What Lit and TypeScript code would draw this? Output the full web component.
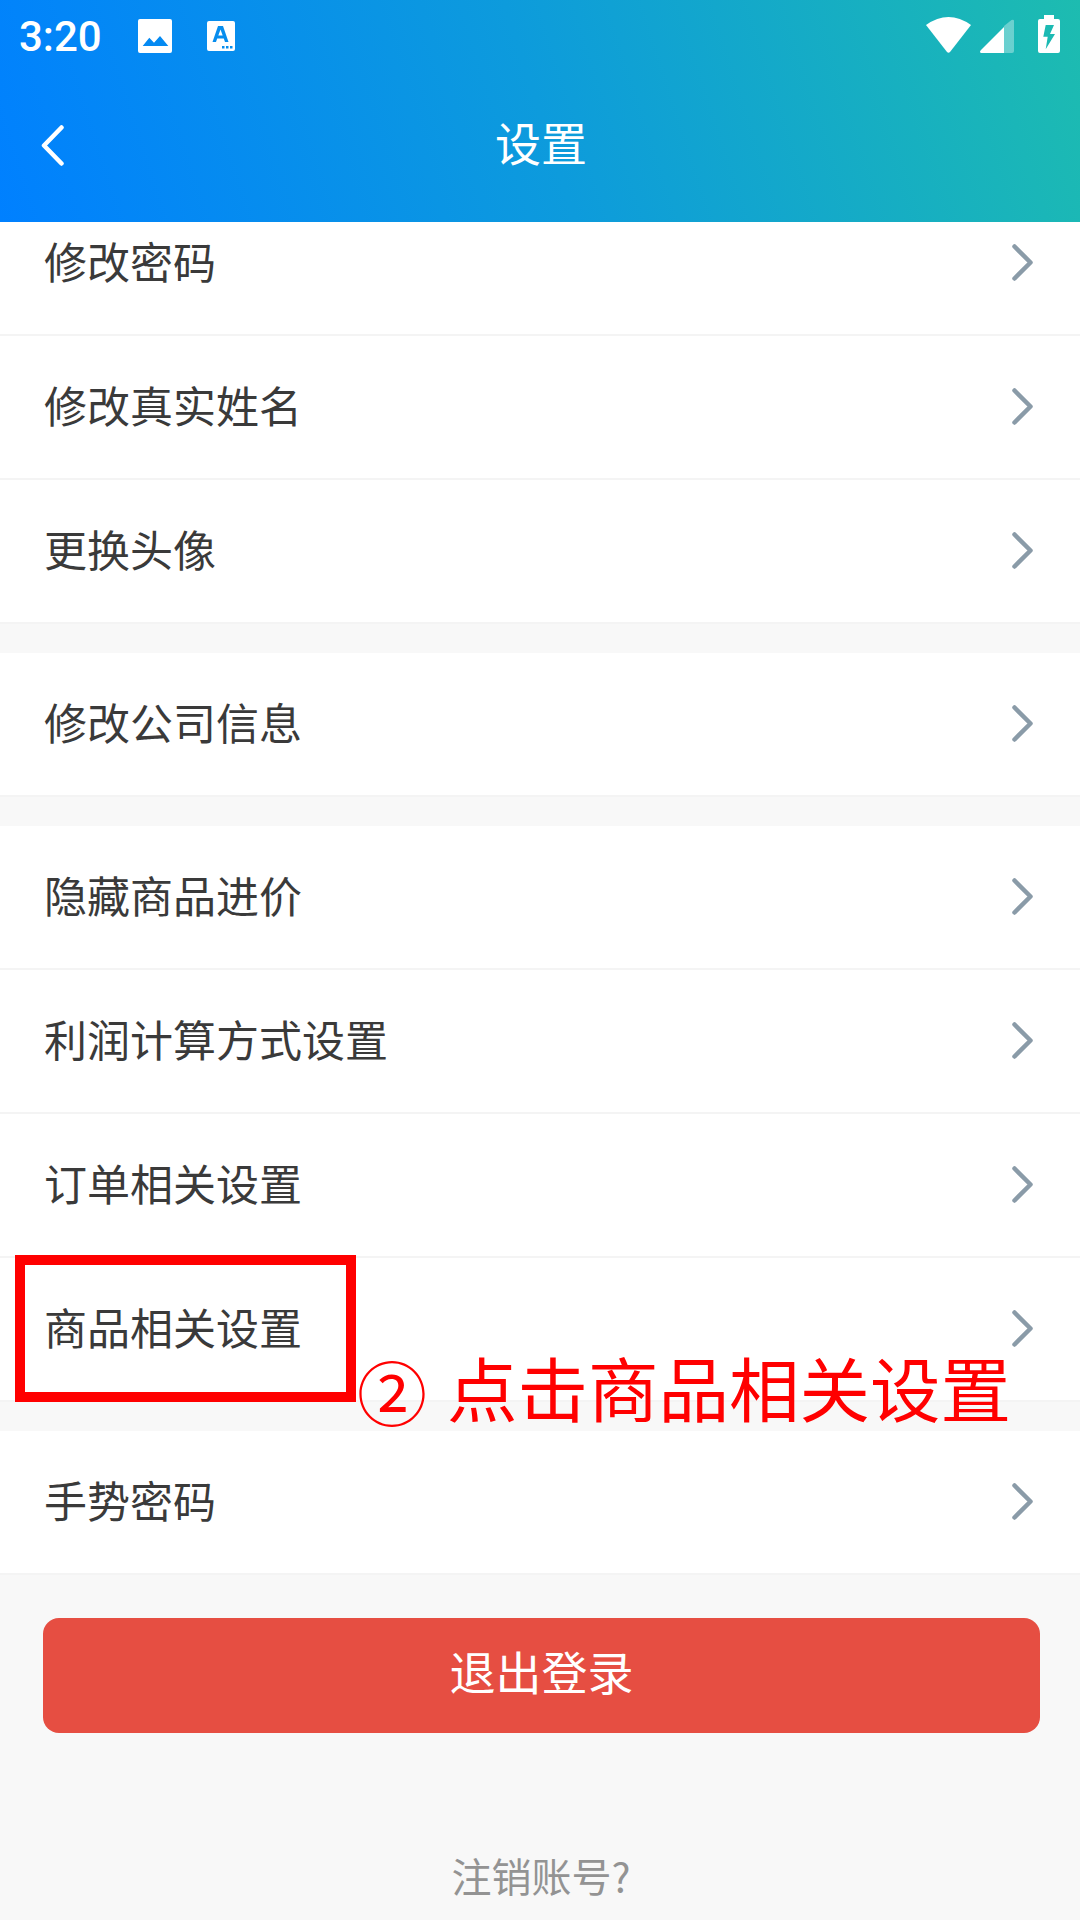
import { LitElement, html, css } from "lit";
import { customElement } from "lit/decorators.js";

const groups = [
  ["修改密码", "修改真实姓名", "更换头像"],
  ["修改公司信息"],
  ["隐藏商品进价", "利润计算方式设置", "订单相关设置", "商品相关设置"],
  ["手势密码"],
];

@customElement("app-root")
export class AppRoot extends LitElement {
  static styles = css`
    :host {
      display: block;
      position: relative;
      width: 1080px;
      height: 1920px;
      overflow: hidden;
      background: #f8f8f8;
      font-family: "Noto Sans CJK SC", "Roboto", sans-serif;
    }
    .top {
      height: 222px;
      background: linear-gradient(72deg, #0080ff 0%, #0d9bdc 50%, #1dbcb0 100%);
      color: #fff;
      display: flex;
      flex-direction: column;
      position: relative;
      z-index: 1;
    }
    .status {
      height: 53px;
      box-sizing: content-box;
      padding: 15px 20px 0 19px;
      display: flex;
      align-items: flex-start;
    }
    .time {
      font: 500 42px/44px "Roboto", sans-serif;
      width: 119px;
    }
    .status svg { display: block; }
    .pic { margin-right: 35px; }
    .spacer { flex: 1; }
    .wifi { margin-right: 9px; }
    .signal { margin-right: 24px; }
    .nav {
      flex: 1;
      display: flex;
      align-items: center;
      justify-content: center;
      position: relative;
      padding: 0 0 8px 2px;
    }
    .title { font-size: 46px; }
    .back { position: absolute; left: 41px; top: 57px; }
    .main { height: 1698px; overflow: hidden; }
    .group { background: #fff; margin-bottom: 29px; }
    .group.first { margin-top: -30px; }
    .group.last { margin-bottom: 0; }
    .row {
      height: 144px;
      box-sizing: border-box;
      border-bottom: 2px solid #f4f4f4;
      display: flex;
      align-items: center;
      justify-content: space-between;
      padding: 0 47px 0 44px;
      font-size: 43px;
      color: #3a3a3a;
    }
    .label { margin-bottom: 7px; }
    .chev { margin-bottom: 1px; }
    .btn {
      margin: 43px 40px 0 43px;
      height: 115px;
      border-radius: 16px;
      background: #e64e42;
      color: #fff;
      font-size: 46px;
      padding-bottom: 12px;
      box-sizing: border-box;
      display: flex;
      align-items: center;
      justify-content: center;
    }
    .cancel {
      margin-top: 113px;
      padding-left: 2px;
      text-align: center;
      font-size: 40px;
      color: #939393;
    }
    .mark {
      position: absolute;
      left: 15px;
      top: 1255px;
      width: 341px;
      height: 147px;
      box-sizing: border-box;
      border: 10px solid #ff0000;
    }
    .note {
      position: absolute;
      left: 357px;
      top: 1336px;
      display: flex;
      align-items: flex-start;
      font-size: 70px;
      line-height: 100px;
      color: #ff0000;
      white-space: pre;
    }
    .num { margin-top: 5px; }
    .note-text { margin-left: 20px; font-size: 70.500px; }
  `;

  private chevron() {
    return html`<svg class="chev" width="21" height="37" viewBox="0 0 21 37" fill="none">
      <path d="M2.500 2.500 L18.500 18.500 L2.500 34.500" stroke="#8a9ba8" stroke-width="4.500" stroke-linecap="round" stroke-linejoin="round"/>
    </svg>`;
  }

  render() {
    return html`
      <div class="top">
        <div class="status">
          <span class="time">3:20</span>
          <svg class="pic" width="34" height="38" viewBox="0 0 34 38">
            <path fill="#fff" fill-rule="evenodd" d="M2 4h30a2 2 0 0 1 2 2v30a2 2 0 0 1-2 2H2a2 2 0 0 1-2-2V6a2 2 0 0 1 2-2z M4.700 31 L11.300 22.700 L16 27.700 L22 21 L30.300 31z"/>
          </svg>
          <svg width="28" height="38" viewBox="0 0 28 38">
            <path fill="#fff" fill-rule="evenodd" d="M2 6h24a2 2 0 0 1 2 2v26a2 2 0 0 1-2 2H2a2 2 0 0 1-2-2V8a2 2 0 0 1 2-2z M11 11 L5.500 27h3.500l1.200-3.500h6.600L18 27h3.500L16 11z M11.300 20.500 L13.500 14.500l2.200 6z M15 31h2.500v2.500H15z M19 31h2.500v2.500H19z M23 31h2.500v2.500H23z"/>
          </svg>
          <span class="spacer"></span>
          <svg class="wifi" width="45" height="38" viewBox="0 0 45 38">
            <path fill="#fff" d="M0 10 Q22.500 -6 45 10 L24 37 Q22.500 38.500 21 37 Z"/>
          </svg>
          <svg class="signal" width="34" height="38" viewBox="0 0 34 38">
            <path fill="#fff" opacity="0.35" d="M24 11 L31.500 5 Q34 4 34 6 V36 Q34 38 32 38 H24 Z"/>
            <path fill="#fff" d="M24 12 V38 H1 Q-1 37 1 35 Z"/>
          </svg>
          <svg width="22" height="38" viewBox="0 0 22 38">
            <path fill="#fff" fill-rule="evenodd" d="M6 0h10v4h4a2 2 0 0 1 2 2v30a2 2 0 0 1-2 2H2a2 2 0 0 1-2-2V6a2 2 0 0 1 2-2h4z M7.700 10 H16 L12 19 H17 L7.700 34.300 L9.700 21.700 H5.300z"/>
          </svg>
        </div>
        <div class="nav">
          <svg class="back" width="26" height="41" viewBox="0 0 26 41" fill="none">
            <path d="M20.500 2.500 L3 20.500 L20.500 38.500" stroke="#fff" stroke-width="4.500" stroke-linecap="round" stroke-linejoin="round"/>
          </svg>
          <span class="title">设置</span>
        </div>
      </div>
      <div class="main">
        ${groups.map(
          (g, i) => html`<div class="group ${i === 0 ? "first" : ""} ${i === groups.length - 1 ? "last" : ""}">
            ${g.map((t) => html`<div class="row"><span class="label">${t}</span>${this.chevron()}</div>`)}
          </div>`
        )}
        <div class="btn">退出登录</div>
        <div class="cancel">注销账号?</div>
      </div>
      <div class="mark"></div>
      <div class="note"><span class="num">②</span><span class="note-text">点击商品相关设置</span></div>
    `;
  }
}
